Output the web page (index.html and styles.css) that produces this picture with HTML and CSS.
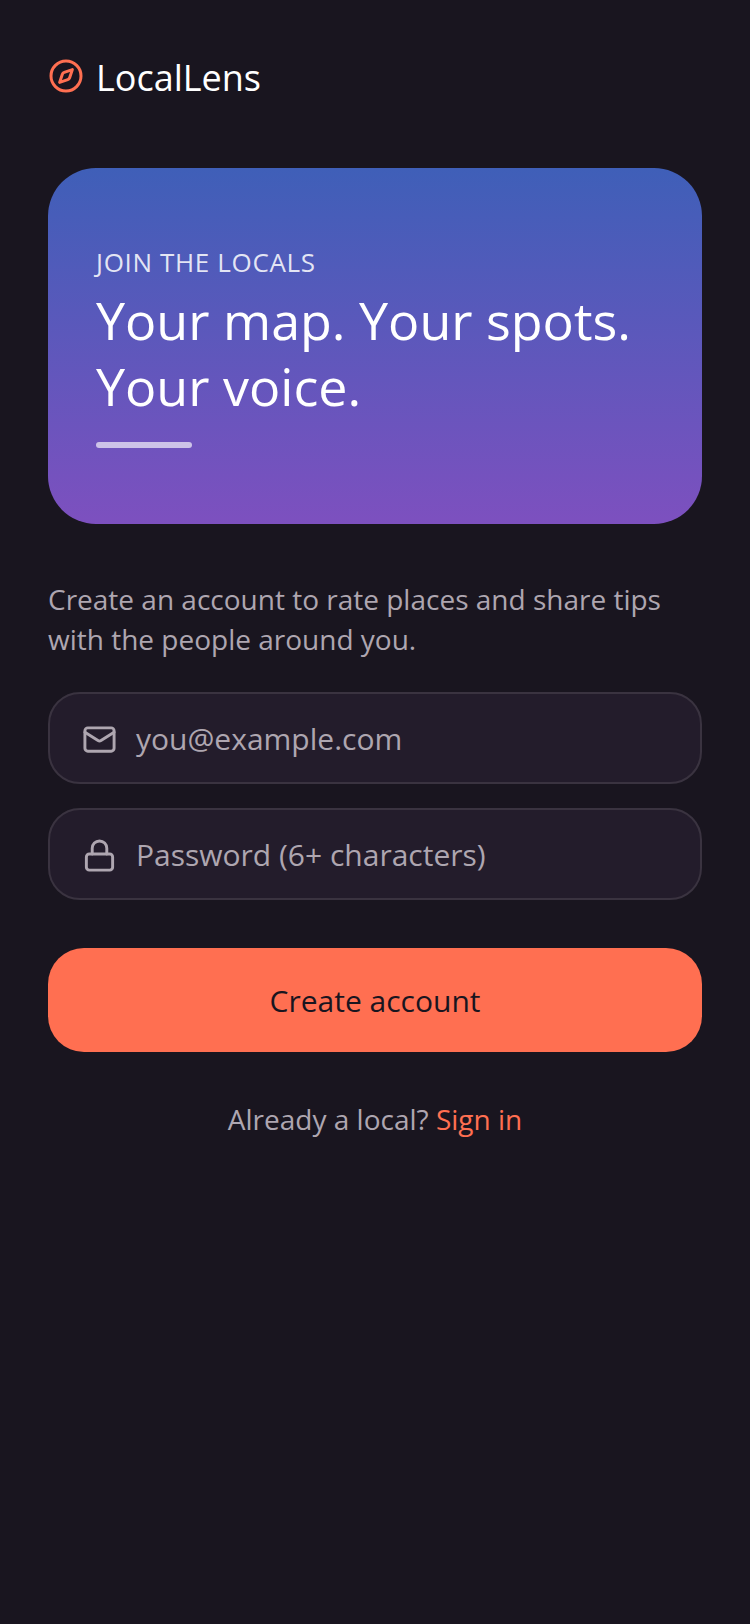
FILE: index.html
```html
<!DOCTYPE html>
<html lang="en">
<head>
<meta charset="utf-8">
<title>LocalLens</title>
<link rel="stylesheet" href="styles.css">
</head>
<body>
<main class="screen">
  <header class="brand">
    <svg class="brand-icon" viewBox="0 0 24 24" fill="none" stroke="currentColor" stroke-width="2" stroke-linecap="round" stroke-linejoin="round"><circle cx="12" cy="12" r="10"/><path d="m16.24 7.76-1.804 5.411a2 2 0 0 1-1.265 1.265L7.76 16.24l1.804-5.411a2 2 0 0 1 1.265-1.265z"/></svg>
    <span class="brand-name">LocalLens</span>
  </header>
  <section class="hero">
    <p class="eyebrow">JOIN THE LOCALS</p>
    <h1 class="headline">Your map. Your spots. Your voice.</h1>
    <div class="rule"></div>
  </section>
  <p class="intro">Create an account to rate places and share tips with the people around you.</p>
  <form class="fields">
    <label class="field">
      <svg class="field-icon" viewBox="0 0 24 24" fill="none" stroke="currentColor" stroke-width="2" stroke-linecap="round" stroke-linejoin="round"><rect x="2" y="4" width="20" height="16" rx="2"/><path d="m22 7-8.97 5.7a1.94 1.94 0 0 1-2.06 0L2 7"/></svg>
      <span class="placeholder">you@example.com</span>
    </label>
    <label class="field">
      <svg class="field-icon" viewBox="0 0 24 24" fill="none" stroke="currentColor" stroke-width="2" stroke-linecap="round" stroke-linejoin="round"><rect x="3" y="11" width="18" height="11" rx="2" ry="2"/><path d="M7 11V7a5 5 0 0 1 10 0v4"/></svg>
      <span class="placeholder">Password (6+ characters)</span>
    </label>
  </form>
  <div class="cta">Create account</div>
  <p class="signin">Already a local? <span class="signin-link">Sign in</span></p>
</main>
</body>
</html>
```
FILE: styles.css
```css
* { box-sizing: border-box; }
html, body { margin: 0; padding: 0; }
body {
  background: #19151f;
  font-family: "Open Sans", "Noto Sans", sans-serif;
  color: #fff;
  width: 750px;
  height: 1624px;
  overflow: hidden;
}
.screen { padding: 48px 48px 0; display: flex; flex-direction: column; }
.brand { display: flex; align-items: center; gap: 12px; height: 56px; }
.brand-icon { width: 36px; height: 36px; color: #ff6f51; flex: none; }
.brand-name { font-size: 36px; line-height: 56px; margin-top: 4px; color: #fff; }
.hero {
  margin-top: 64px;
  height: 356px;
  border-radius: 48px;
  background: linear-gradient(180deg, #3f5fb8 0%, #7d50bf 100%);
  padding: 78px 48px 0;
}
.eyebrow { margin: 0; font-size: 26px; line-height: 32px; letter-spacing: 0.65px; color: rgba(255,255,255,.85); }
.headline { margin: 9px 0 0; font-size: 52px; line-height: 66px; font-weight: 400; color: #fff; }
.rule { margin-top: 23px; width: 96px; height: 6px; border-radius: 3px; background: rgba(255,255,255,.65); }
.intro { margin: 55px 0 0; font-size: 28px; line-height: 40px; color: #aea6b0; }
.fields { margin-top: 33px; display: flex; flex-direction: column; gap: 24px; }
.field {
  height: 92px;
  border: 2px solid #3a3340;
  border-radius: 32px;
  background: #231c2b;
  display: flex;
  align-items: center;
  padding: 0 32px;
  gap: 19px;
  color: #aea6b0;
}
.field-icon { width: 35px; height: 35px; flex: none; margin-top: 2px; }
.placeholder { font-size: 30px; line-height: 40px; padding-top: 2px; }
.cta {
  margin-top: 48px;
  height: 104px;
  border-radius: 36px;
  background: #ff6f51;
  color: #19151f;
  font-size: 30px;
  display: flex;
  align-items: center;
  justify-content: center;
}
.signin { margin: 47px 0 0; text-align: center; font-size: 28px; line-height: 40px; color: #aea6b0; }
.signin-link { color: #ff6f51; }
```
